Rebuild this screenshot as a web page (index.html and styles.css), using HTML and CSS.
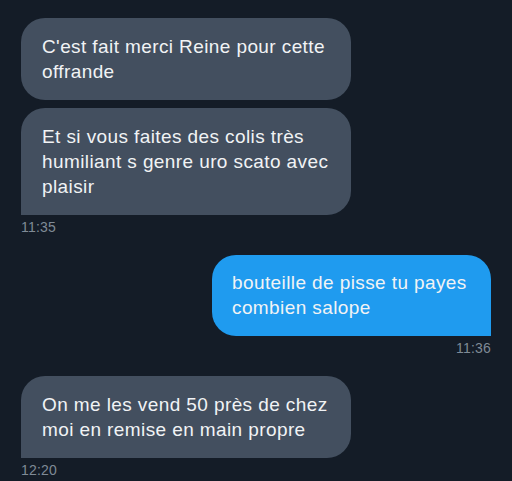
FILE: index.html
```html
<!DOCTYPE html>
<html lang="fr">
<head>
<meta charset="utf-8">
<link rel="stylesheet" href="styles.css">
</head>
<body>
<main class="chat">
  <div class="group in">
    <div class="bubble gray round">C'est fait merci Reine pour cette offrande</div>
    <div class="bubble gray tail-left">Et si vous faites des colis très humiliant s genre uro scato avec plaisir</div>
    <div class="time">11:35</div>
  </div>
  <div class="group out">
    <div class="bubble blue tail-right">bouteille de pisse tu payes combien salope</div>
    <div class="time">11:36</div>
  </div>
  <div class="group in">
    <div class="bubble gray tail-left">On me les vend 50 près de chez moi en remise en main propre</div>
    <div class="time">12:20</div>
  </div>
</main>
</body>
</html>
```
FILE: styles.css
```css
html, body {
  margin: 0;
  padding: 0;
  background: #141c27;
}
body {
  width: 512px;
  height: 481px;
  overflow: hidden;
  font-family: "Liberation Sans", Arial, sans-serif;
  -webkit-font-smoothing: antialiased;
}
.chat {
  display: flex;
  flex-direction: column;
  gap: 20px;
  padding: 18px 21px 0 21px;
}
.group {
  display: flex;
  flex-direction: column;
  gap: 8px;
}
.group.in { align-items: flex-start; }
.group.out { align-items: flex-end; }
.bubble {
  box-sizing: border-box;
  color: #f1f3f5;
  font-size: 19px;
  letter-spacing: 0.4px;
  line-height: 25px;
  border-radius: 24px;
  padding: 16px 18px 16px 21px;
}
.gray {
  background: #434f5f;
  width: 330px;
}
.blue {
  background: #1f9bef;
  width: 279px;
  padding: 15px 18px 16px 20px;
}
.tail-left { border-bottom-left-radius: 0; }
.tail-right { border-bottom-right-radius: 0; }
.time {
  color: #7f8a96;
  font-size: 14px;
  letter-spacing: 0.2px;
  line-height: 16px;
  margin-top: -4px;
}
```
